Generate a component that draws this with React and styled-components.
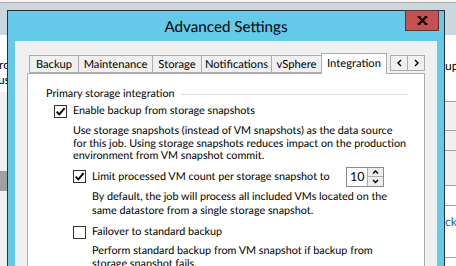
import React from "react";
import styled, { createGlobalStyle } from "styled-components";

const Global = createGlobalStyle`
  html, body { margin: 0; padding: 0; background: #fff; }
  body { font-family: Lato, "Liberation Sans", sans-serif; text-rendering: geometricPrecision; }
`;

const Desktop = styled.div`
  position: relative;
  width: 456px;
  height: 266px;
  overflow: hidden;
  background: #fff;
  font-family: Lato, "Liberation Sans", sans-serif;
  font-size: 10.8px;
  text-rendering: geometricPrecision;
  color: #000;
`;

/* ---------- background window ---------- */
const BackWindow = styled.div`
  position: absolute;
  inset: 0;
  display: flex;
  flex-direction: column;
`;
const BackTop = styled.div`
  flex: none;
  height: 2px;
  background: #f4f4f4;
  border-bottom: 1px solid #a8a8a8;
`;
const BackTitle = styled.div`
  flex: none;
  height: 32px;
  background: #cad7de;
`;
const BackBody = styled.div`
  flex: 1;
  display: flex;
  justify-content: space-between;
  overflow: hidden;
`;
const LeftPane = styled.div`
  width: 10px;
  display: flex;
  flex-direction: column;
  overflow: hidden;
`;
const LeftTop = styled.div`
  flex: none;
  height: 57px;
  background: #fff;
  display: flex;
  flex-direction: column;
  align-items: flex-end;
`;
const Frag = styled.div`
  font-size: 12px;
  line-height: 14px;
  white-space: nowrap;
  margin-top: ${(p) => p.$mt || 0}px;
  color: ${(p) => (p.$link ? "#0066cc" : "#000")};
`;
const LeftBottom = styled.div`
  flex: 1;
  background: #f0f0f0;
`;
const GrayBlock = styled.div`
  margin-top: 79px;
  height: 20px;
  background: #a0a0a0;
`;
const RightPane = styled.div`
  width: 14px;
  display: flex;
  flex-direction: column;
  overflow: hidden;
`;
const RightTop = styled.div`
  flex: none;
  height: 66px;
  background: #fff;
  padding-left: 3px;
  display: flex;
  flex-direction: column;
`;
const RightRow = styled.div`
  box-sizing: border-box;
  flex: none;
  height: ${(p) => p.$h}px;
  background: ${(p) => p.$bg || "#f0f0f0"};
  border-top: 1px solid #a0a0a0;
  padding-left: 3px;
  display: flex;
  flex-direction: column;
`;

/* ---------- dialog ---------- */
const Dialog = styled.div`
  position: absolute;
  left: 7px;
  top: 10px;
  width: 438px;
  height: 290px;
  box-sizing: border-box;
  border: 1px solid #2e2e2e;
  background: #65c9ea;
  display: flex;
  flex-direction: column;
  padding: 0 7px;
`;
const TitleBar = styled.div`
  height: 30px;
  display: flex;
  align-items: center;
  justify-content: center;
  font-size: 15.2px;
  padding-top: 1px;
  box-sizing: border-box;
`;
const CloseBtn = styled.div`
  position: absolute;
  top: -1px;
  right: 5px;
  width: 34px;
  height: 21px;
  box-sizing: border-box;
  background: #c75050;
  border: 1px solid #5c3434;
  display: flex;
  align-items: center;
  justify-content: center;
`;
const Client = styled.div`
  flex: 1;
  background: #f0f0f0;
  padding: 12px 12px 0 12px;
  display: flex;
  flex-direction: column;
`;
const TabRow = styled.div`
  height: 21px;
  display: flex;
  align-items: flex-end;
  padding-left: 2px;
  position: relative;
  z-index: 1;
  font-size: 11.2px;
`;
const Tab = styled.div`
  box-sizing: border-box;
  width: ${(p) => p.$w}px;
  height: ${(p) => (p.$active ? 21 : 18)}px;
  margin-bottom: ${(p) => (p.$active ? 0 : 1)}px;
  margin-left: -1px;
  border: 1px solid #acacac;
  border-bottom: ${(p) => (p.$active ? "none" : "1px solid #acacac")};
  background: ${(p) => (p.$active ? "#fff" : "#f0f0f0")};
  display: flex;
  align-items: center;
  justify-content: center;
  padding-bottom: ${(p) => (p.$active ? 2 : 0)}px;
  white-space: nowrap;
  &:first-child { margin-left: 0; }
`;
const ArrowGroup = styled.div`
  margin-left: auto;
  align-self: flex-start;
  margin-top: 2px;
  display: flex;
`;
const ArrowBtn = styled.div`
  width: 18px;
  height: 16px;
  box-sizing: border-box;
  border: 1px solid #acacac;
  background: #f0f0f0;
  margin-left: -1px;
  display: flex;
  align-items: center;
  justify-content: center;
`;
const Panel = styled.div`
  flex: 1;
  margin-top: -1px;
  background: #fff;
  border: 1px solid #acacac;
  padding: 13px 16px 0 18px;
  display: flex;
  flex-direction: column;
`;
const GroupHeader = styled.div`
  display: flex;
  align-items: center;
  gap: 6px;
  line-height: 14px;
  &::after {
    content: "";
    flex: 1;
    height: 1px;
    background: #dcdcdc;
  }
`;
const CheckRow = styled.label`
  display: flex;
  align-items: center;
  gap: 6px;
  line-height: 14px;
  margin-left: ${(p) => p.$indent}px;
  margin-top: ${(p) => p.$mt}px;
  white-space: nowrap;
`;
const Box = styled.span`
  width: 13px;
  height: 13px;
  box-sizing: border-box;
  border: 1px solid #333;
  background: #fff;
  display: inline-flex;
  align-items: center;
  justify-content: center;
  flex: none;
`;
const RowLabel = styled.span`
  width: ${(p) => (p.$w ? `${p.$w}px` : "auto")};
  flex: none;
`;
const Desc = styled.div`
  margin-left: ${(p) => p.$indent}px;
  margin-top: ${(p) => p.$mt}px;
  line-height: ${(p) => p.$lh || 13}px;
  white-space: nowrap;
`;
const Spinner = styled.div`
  display: flex;
  width: 38px;
  height: 20px;
  box-sizing: border-box;
  border: 1px solid #8a8a8a;
  background: #fff;
  flex: none;
`;
const SpinValue = styled.div`
  flex: 1;
  padding-left: 3px;
  line-height: 18px;
  font-size: 12.5px;
`;
const SpinButtons = styled.div`
  width: 16px;
  display: flex;
  flex-direction: column;
`;
const SpinBtn = styled.div`
  flex: 1;
  box-sizing: border-box;
  border-left: 1px solid #acacac;
  border-top: ${(p) => (p.$down ? "1px solid #acacac" : "none")};
  background: #ececec;
  display: flex;
  align-items: center;
  justify-content: center;
`;

const Check = ({ on }) => (
  <Box>
    {on && (
      <svg width="11" height="11" viewBox="0 0 11 11">
        <path d="M1.6 5.6 L4.3 8.3 L9.6 2.2" fill="none" stroke="#000" strokeWidth="1.9" />
      </svg>
    )}
  </Box>
);

const Chevron = ({ dir }) => {
  const d = {
    left: "M4 1 L1 4 L4 7",
    right: "M1 1 L4 4 L1 7",
    up: "M1 4.5 L3.5 2 L6 4.5",
    down: "M1 2 L3.5 4.5 L6 2",
  }[dir];
  const horizontal = dir === "left" || dir === "right";
  return (
    <svg width={horizontal ? 5 : 7} height={horizontal ? 8 : 6} viewBox={horizontal ? "0 0 5 8" : "0 0 7 6"}>
      <path d={d} fill="none" stroke="#000" strokeWidth="1.4" />
    </svg>
  );
};

const tabs = [
  { label: "Backup", w: 50 },
  { label: "Maintenance", w: 75 },
  { label: "Storage", w: 50 },
  { label: "Notifications", w: 71 },
  { label: "vSphere", w: 51 },
  { label: "Integration", w: 66, active: true },
];

export default function App() {
  return (
    <Desktop>
      <Global />
      <BackWindow>
        <BackTop />
        <BackTitle />
        <BackBody>
          <LeftPane>
            <LeftTop>
              <Frag $mt={4} $link>:</Frag>
              <Frag $mt={5}>ro</Frag>
              <Frag $mt={1}>us</Frag>
            </LeftTop>
            <LeftBottom>
              <GrayBlock />
            </LeftBottom>
          </LeftPane>
          <RightPane>
            <RightTop>
              <Frag $mt={24}>up</Frag>
            </RightTop>
            <RightRow $h={29} />
            <RightRow $h={20} />
            <RightRow $h={35} />
            <RightRow $h={20} $bg="#fff" />
            <RightRow $h={52} $bg="#fff">
              <Frag $mt={9} $link>ck</Frag>
            </RightRow>
            <RightRow $h={20} $bg="#fff" />
          </RightPane>
        </BackBody>
      </BackWindow>

      <Dialog>
        <TitleBar>Advanced Settings</TitleBar>
        <CloseBtn>
          <svg width="11" height="9" viewBox="0 0 11 9">
            <path d="M2 1 L9 8 M9 1 L2 8" stroke="#000" strokeWidth="2.3" fill="none" />
            <path d="M0.5 1 H3.5 M7.5 1 H10.5 M0.5 8 H3.5 M7.5 8 H10.5" stroke="#000" strokeWidth="1.4" fill="none" />
          </svg>
        </CloseBtn>
        <Client>
          <TabRow>
            {tabs.map((t) => (
              <Tab key={t.label} $w={t.w} $active={t.active}>
                {t.label}
              </Tab>
            ))}
            <ArrowGroup>
              <ArrowBtn>
                <Chevron dir="left" />
              </ArrowBtn>
              <ArrowBtn>
                <Chevron dir="right" />
              </ArrowBtn>
            </ArrowGroup>
          </TabRow>
          <Panel>
            <GroupHeader>Primary storage integration</GroupHeader>
            <CheckRow $indent={8} $mt={3}>
              <Check on />
              <span>Enable backup from storage snapshots</span>
            </CheckRow>
            <Desc $indent={27} $mt={7} $lh={12.5}>
              Use storage snapshots (instead of VM snapshots) as the data source
              <br />
              for this job. Using storage snapshots reduces impact on the production
              <br />
              environment from VM snapshot commit.
            </Desc>
            <CheckRow $indent={27} $mt={4}>
              <Check on />
              <RowLabel $w={248}>Limit processed VM count per storage snapshot to</RowLabel>
              <Spinner>
                <SpinValue>10</SpinValue>
                <SpinButtons>
                  <SpinBtn>
                    <Chevron dir="up" />
                  </SpinBtn>
                  <SpinBtn $down>
                    <Chevron dir="down" />
                  </SpinBtn>
                </SpinButtons>
              </Spinner>
            </CheckRow>
            <Desc $indent={46} $mt={3.5} $lh={13.5}>
              By default, the job will process all included VMs located on the
              <br />
              same datastore from a single storage snapshot.
            </Desc>
            <CheckRow $indent={27} $mt={8}>
              <Check />
              <span>Failover to standard backup</span>
            </CheckRow>
            <Desc $indent={46} $mt={4.5} $lh={13}>
              Perform standard backup from VM snapshot if backup from
              <br />
              storage snapshot fails.
            </Desc>
          </Panel>
        </Client>
      </Dialog>
    </Desktop>
  );
}
